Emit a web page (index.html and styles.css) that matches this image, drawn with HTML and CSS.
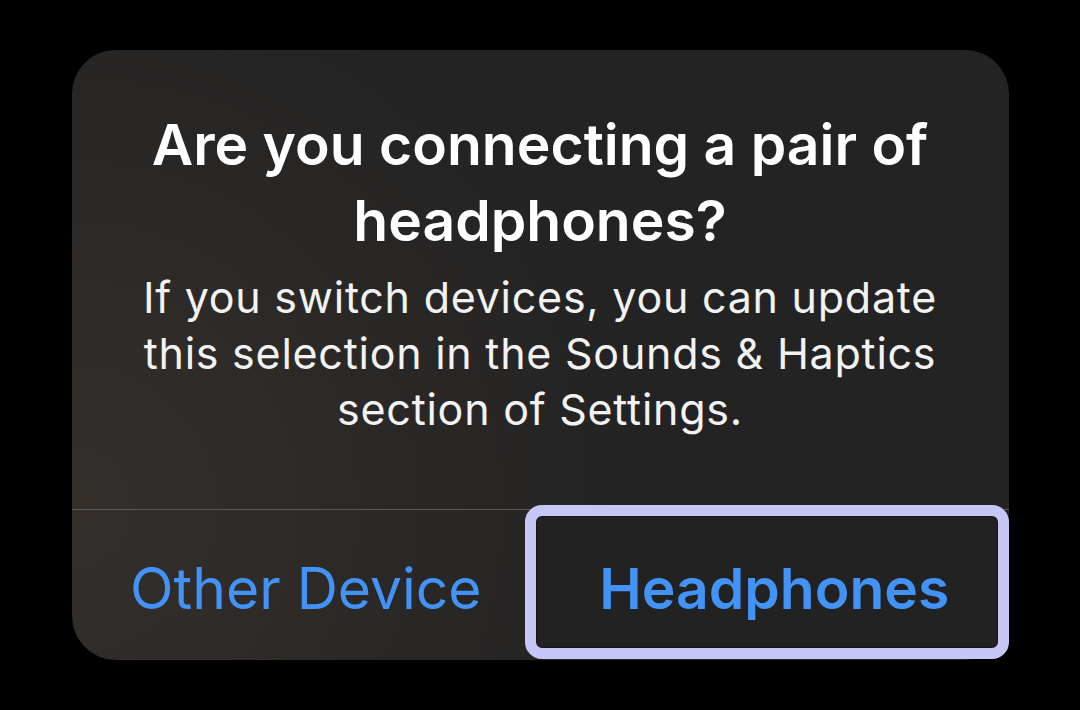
FILE: index.html
```html
<!DOCTYPE html>
<html lang="en">
<head>
    <meta charset="UTF-8">
    <meta name="viewport" content="width=device-width, initial-scale=1.0">
    <title>Headphones prompt</title>
    <link rel="stylesheet" href="styles.css">
</head>
<body>

    <div class="alert">
        <div class="alert-body">
            <h2 class="alert-title">Are you connecting a pair of headphones?</h2>
            <p class="alert-message">If you switch devices, you can update this selection in the Sounds &amp; Haptics section of Settings.</p>
        </div>
        <div class="alert-actions">
            <button class="action">Other Device</button>
            <button class="action action-primary">Headphones</button>
        </div>
    </div>

</body>
</html>
```

FILE: styles.css
```css
body {
    margin: 0;
    background-color: #000;
    font-family: Inter, "Noto Sans", sans-serif;
}
.alert {
    width: 937px;
    margin: 50px auto 0;
    border-radius: 44px;
    background: radial-gradient(circle at 0 75%, #342f2b 0%, #232323 55%);
}
.alert-body {
    padding: 57px 50px 72px;
    text-align: center;
    border-bottom: 1px solid #5a5958;
}
.alert-title {
    margin: 0;
    color: #fff;
    font-size: 57px;
    font-weight: 600;
    line-height: 76px;
}
.alert-message {
    margin: 10px 0 0;
    color: #f2f2f2;
    font-size: 43px;
    line-height: 56px;
    letter-spacing: 0.75px;
}
.alert-actions {
    display: flex;
    height: 150px;
}
.action {
    flex: 1;
    padding: 7px 0 0;
    background: none;
    border: none;
    color: #4293f5;
    font-family: inherit;
    font-size: 57px;
    font-weight: 400;
}
.action-primary {
    position: relative;
    z-index: 0;
    font-weight: 600;
}
/* focus ring sits over the separator and the corner */
.action-primary::after {
    content: "";
    position: absolute;
    z-index: -1;
    left: -15px;
    top: -5px;
    right: 0;
    bottom: 1px;
    border: 11px solid #c6c6f7;
    border-radius: 17px;
    background-color: #222;
    box-shadow: inset 0 0 0 1px #151515;
}
```
